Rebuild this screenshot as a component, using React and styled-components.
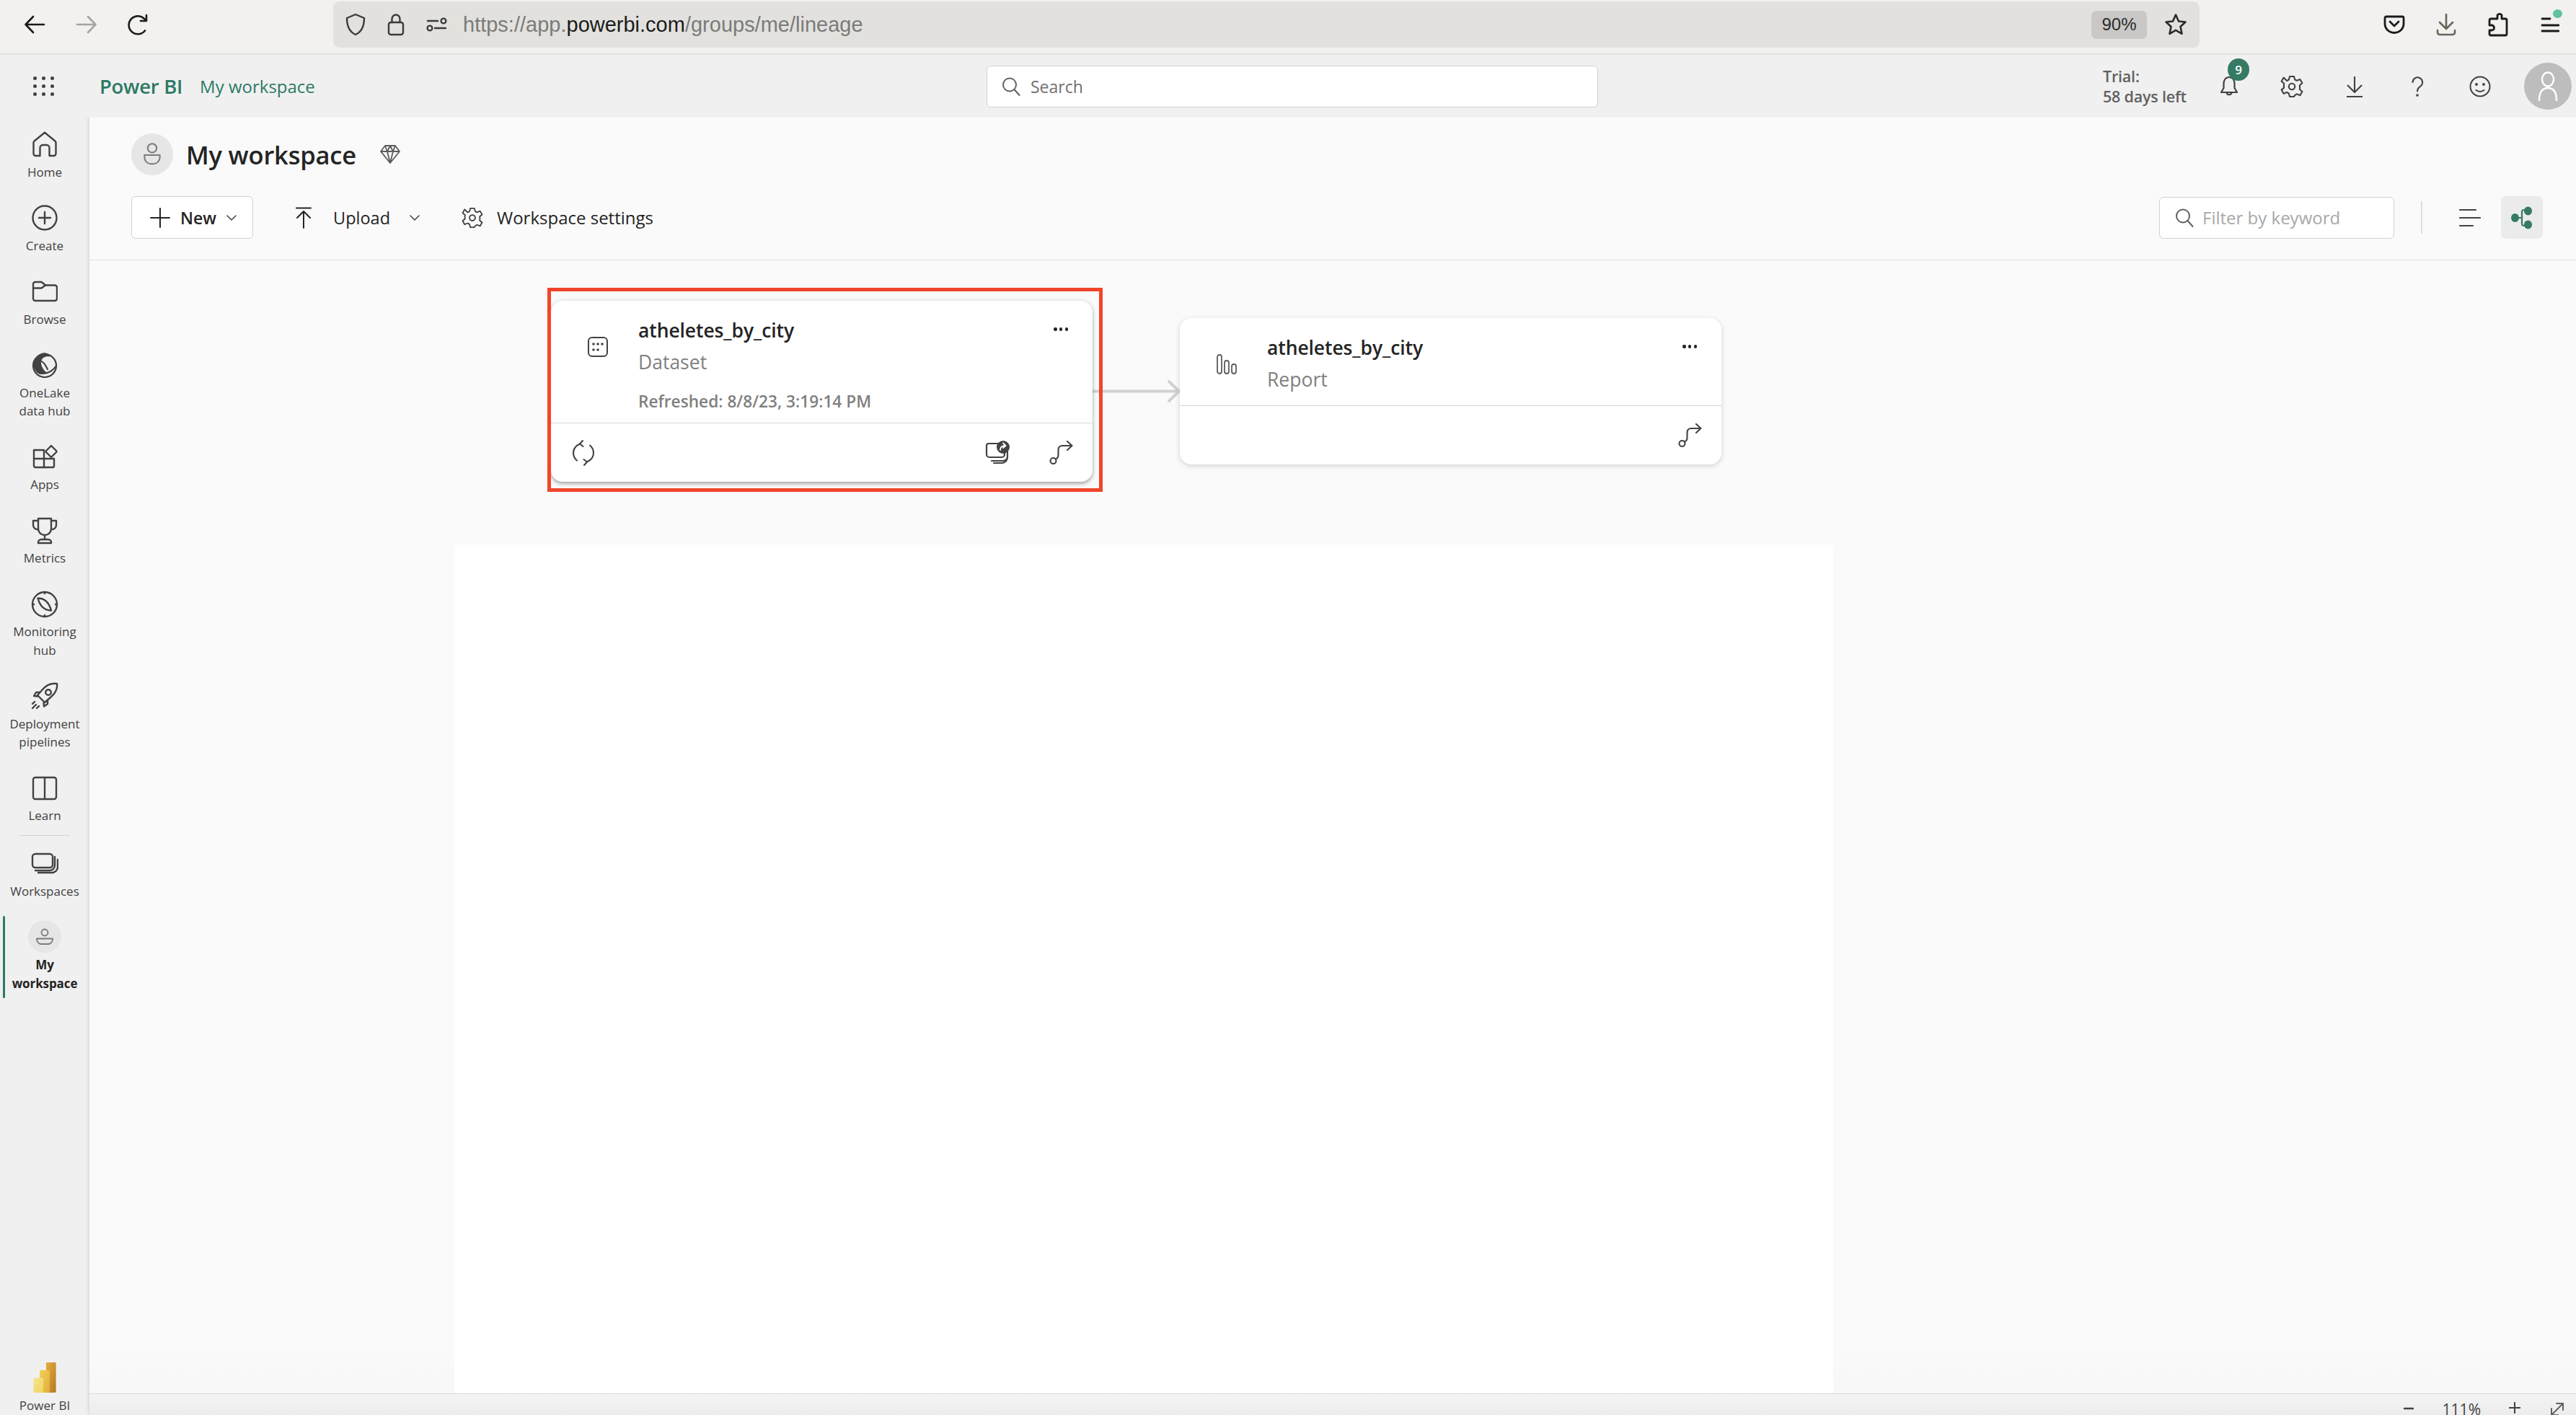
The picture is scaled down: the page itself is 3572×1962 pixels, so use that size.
import React from 'react';
import styled, { createGlobalStyle } from 'styled-components';

const GlobalStyle = createGlobalStyle`
  html, body { margin: 0; padding: 0; width: 100%; height: 100%; overflow: hidden; }
  body { font-family: "Open Sans", "Noto Sans", sans-serif; color: #242424; }
  #root { height: 100%; }
  * { box-sizing: border-box; }
`;

const Page = styled.div`
  width: 3572px; height: 1962px; display: flex; flex-direction: column; overflow: hidden; background: #f0f0f0;
`;

/* ---------- browser chrome ---------- */
const BrowserBar = styled.div`
  height: 76px; flex: none; display: flex; align-items: flex-start; background: #f2f1ef;
  border-bottom: 2px solid #e2e2e0; padding-left: 12px; padding-top: 2px;
`;
const ChromeButton = styled.div`
  width: 72px; height: 64px; flex: none; display: flex; align-items: center; justify-content: center;
`;
const UrlBar = styled.div`
  width: 2588px; height: 64px; margin-left: 234px; margin-right: 234px; flex: none; display: flex; align-items: center;
  background: #e2e1de; border-radius: 9px; padding: 0 17px 0 15px;
`;
const UrlIcon = styled.div`
  width: 32px; flex: none; margin-right: ${p => p.$gap}px; display: flex; align-items: center; justify-content: center;
`;
const UrlText = styled.div`
  font-family: "Liberation Sans", sans-serif; font-size: 29px; color: #7b7b79; white-space: nowrap; flex: 1;
`;
const UrlHost = styled.span`color: #1b1b1b;`;
const ZoomPill = styled.div`
  width: 77px; height: 39px; border-radius: 7px; background: #c9c8c6; flex: none;
  display: flex; align-items: center; justify-content: center;
  font-family: "Liberation Sans", sans-serif; font-size: 24px; color: #2b2b2b; margin-right: 24px;
`;
const MenuIconWrap = styled.div`position: relative; width: 72px; height: 64px; display: flex; align-items: center; justify-content: center; flex: none;`;
const UpdateDot = styled.span`
  position: absolute; left: 40px; top: 11px; width: 13px; height: 12px; border-radius: 50%; background: #5fc1a0;
`;

/* ---------- app header ---------- */
const AppHeader = styled.header`
  height: 87px; flex: none; display: flex; align-items: center; background: #f0f0f0; position: relative; z-index: 2;
`;
const BrandGroup = styled.div`
  width: 1368px; flex: none; display: flex; align-items: center; padding-left: 46px;
`;
const Waffle = styled.div`
  width: 29px; height: 27px; display: grid; grid-template-columns: repeat(3, 5px); grid-auto-rows: 5px; justify-content: space-between; align-content: space-between; flex: none;
`;
const WaffleDot = styled.span`background: #424242; border-radius: 50%;`;
const BrandName = styled.div`
  margin-left: 63px; font-size: 27.5px; font-weight: 600; color: #2d7a64; letter-spacing: -0.3px; white-space: nowrap;
`;
const BrandCrumb = styled.div`
  margin-left: 24px; font-size: 24px; color: #2d7a64; white-space: nowrap;
`;
const SearchBox = styled.div`
  width: 848px; height: 58px; flex: none; display: flex; align-items: center; gap: 14px; padding-left: 20px;
  background: #fff; border: 1px solid #d1d1d1; border-radius: 6px; font-size: 23px; color: #707070;
`;
const HeaderRight = styled.div`
  margin-left: auto; display: flex; align-items: center; padding-right: 6px;
`;
const TrialText = styled.div`
  width: 131px; font-size: 21.5px; line-height: 28px; font-weight: 600; color: #616161; white-space: nowrap; letter-spacing: -0.2px;
`;
const HeaderIcon = styled.div`
  width: 87px; height: 60px; flex: none; position: relative; display: flex; align-items: center; justify-content: center;
`;
const Badge = styled.span`
  position: absolute; left: 42px; top: -9px; width: 30px; height: 31px; border-radius: 50%; background: #367a64; color: #fff;
  font-size: 17px; font-weight: 600; display: flex; align-items: center; justify-content: center;
`;
const Avatar = styled.div`
  width: 66px; height: 65px; margin-left: 18px; border-radius: 50%; background: #bdbdbd; display: flex; align-items: center; justify-content: center; flex: none;
`;

/* ---------- sidebar ---------- */
const Body = styled.div`flex: 1; min-height: 0; display: flex;`;
const Sidebar = styled.nav`
  width: 124px; flex: none; background: #f0f0f0; display: flex; flex-direction: column; align-items: center; padding-top: 19px; position: relative;
`;
const NavList = styled.div`width: 100%; display: flex; flex-direction: column; gap: 33px;`;
const NavItem = styled.div`
  display: flex; flex-direction: column; align-items: center; width: 100%;
`;
const NavIcon = styled.div`
  height: 36px; margin-bottom: 7.5px; display: flex; align-items: center; justify-content: center; flex: none;
`;
const NavLabel = styled.div`
  font-size: 17px; line-height: 25.5px; color: #424242; text-align: center;
`;
const NavDivider = styled.div`
  width: 70px; height: 1px; background: #d1d1d1; margin: 14.5px 0 20px; flex: none;
`;
const ActiveItem = styled.div`
  width: 100%; height: 114px; margin-top: 22px; padding-top: 6px; position: relative; display: flex; flex-direction: column; align-items: center;
`;
const ActiveBar = styled.span`
  position: absolute; left: 4px; top: 0; bottom: 0; width: 3px; background: #2d7a64; border-radius: 2px;
`;
const ActiveCircle = styled.div`
  width: 46px; height: 45px; border-radius: 50%; background: #e6e6e6; display: flex; align-items: center; justify-content: center; margin-bottom: 4px;
`;
const ActiveLabel = styled.div`
  font-size: 17px; line-height: 26px; font-weight: 700; color: #242424; text-align: center; letter-spacing: -0.1px;
`;
const ProductSwitch = styled.div`
  margin-top: auto; display: flex; flex-direction: column; align-items: center; height: 73px;
`;
const ProductLabel = styled.div`
  font-size: 17px; line-height: 26px; color: #424242; white-space: nowrap; margin-top: 5px;
`;

/* ---------- main ---------- */
const Main = styled.main`
  flex: 1; min-width: 0; display: flex; flex-direction: column; background: #fafafa; position: relative;
  box-shadow: -1px -1px 5px rgba(0,0,0,0.13);
`;
const WorkspaceHead = styled.div`
  flex: none; height: 198px; padding: 22px 46px 0 58px; border-bottom: 1px solid #e0e0e0; display: flex; flex-direction: column; gap: 29px;
`;
const TitleRow = styled.div`display: flex; align-items: center; height: 58px;`;
const TitleAvatar = styled.div`
  width: 58px; height: 58px; border-radius: 50%; background: #e6e6e6; display: flex; align-items: center; justify-content: center; flex: none;
`;
const Title = styled.h1`
  margin: 0 0 0 18px; font-size: 34.5px; font-weight: 600; color: #242424; white-space: nowrap; letter-spacing: -0.2px;
`;
const Diamond = styled.div`margin-left: 32px; display: flex;`;
const ActionRow = styled.div`display: flex; align-items: center; height: 59px;`;
const NewButton = styled.div`
  width: 169px; height: 59px; flex: none; background: #fff; border: 1px solid #d1d1d1; border-radius: 6px;
  display: flex; align-items: center; padding-left: 25px; font-size: 23px; font-weight: 600; color: #242424;
`;
const ActionText = styled.span`
  margin-left: ${p => p.$gap}px; white-space: nowrap; font-size: ${p => p.$size || 23}px; color: #242424; font-weight: ${p => p.$bold ? 600 : 400};
`;
const ActionChevron = styled.span`margin-left: ${p => p.$gap}px; display: flex;`;
const ActionItem = styled.div`
  display: flex; align-items: center; margin-left: ${p => p.$gap}px; flex: none;
`;
const RightTools = styled.div`margin-left: auto; display: flex; align-items: center;`;
const FilterBox = styled.div`
  width: 326px; height: 58px; background: #fff; border: 1px solid #d1d1d1; border-radius: 6px; display: flex; align-items: center; gap: 12px; padding-left: 21px;
  font-size: 24px; color: #a8a8a8; white-space: nowrap;
`;
const ToolDivider = styled.div`width: 2px; height: 45px; background: #dedede; margin-left: 37px;`;
const ListToggle = styled.div`margin-left: 51px; width: 30px; display: flex;`;
const GraphToggle = styled.div`
  width: 58px; height: 59px; margin-left: 28px; background: #ebebeb; border-radius: 6px; display: flex; align-items: center; justify-content: center;
`;

/* ---------- lineage canvas ---------- */
const Canvas = styled.div`
  flex: 1; min-height: 0; position: relative; overflow: hidden; padding: 394px 0 0 506px;
  background: linear-gradient(to bottom, #fafafa calc(100% - 60px), #f7f7f7 100%);
`;
const BlankPanel = styled.div`width: 1912px; height: 100%; background: #ffffff;`;
const NodeCard = styled.article`
  position: absolute; left: ${p => p.$x}px; top: ${p => p.$y}px; width: 751px; background: #fff; border-radius: 16px;
  box-shadow: ${p => p.$selected ? '0 3px 5px rgba(0,0,0,0.28), 0 0 6px rgba(0,0,0,0.1)' : '0 2px 7px rgba(0,0,0,0.16)'};
  display: flex; flex-direction: column;
`;
const NodeBody = styled.div`
  height: ${p => p.$h}px; display: flex; align-items: flex-start; padding: 23px 34px 0 51px; border-bottom: 1px solid #d6d6d6;
`;
const NodeIcon = styled.div`width: 28px; height: 28px; margin-top: 27px; flex: none; display: flex;`;
const NodeText = styled.div`margin-left: 42px; flex: 1; min-width: 0;`;
const NodeTitle = styled.div`font-size: 26.5px; line-height: 36px; font-weight: 600; color: #242424; white-space: nowrap; letter-spacing: -0.1px;`;
const NodeType = styled.div`font-size: 26.5px; line-height: 36px; margin-top: 8px; color: #808080; white-space: nowrap;`;
const NodeMeta = styled.div`font-size: 22.7px; line-height: 32px; margin-top: 21px; font-weight: 600; color: #808080; white-space: nowrap;`;
const NodeMenu = styled.div`display: flex; flex: none; gap: 3px; margin-top: 14px; width: 20px; justify-content: space-between;`;
const MenuDot = styled.span`width: 4.5px; height: 4.5px; border-radius: 50%; background: #242424;`;
const NodeFoot = styled.div`
  height: 81px; display: flex; align-items: center; padding: 0 27px 0 29px; gap: 55px;
`;
const FootSpacer = styled.div`flex: 1;`;
const Connector = styled.svg`position: absolute; left: 1391px; top: 164px;`;
const SelectionFrame = styled.div`
  position: absolute; left: 635px; top: 38px; width: 770px; height: 283px; border: 5px solid #f1452b; pointer-events: none;
`;

/* ---------- status bar ---------- */
const StatusBar = styled.div`
  flex: none; height: 30px; border-top: 1px solid #d9d9d9; background: linear-gradient(to bottom, #f4f4f4, #ececec);
  display: flex; align-items: flex-start; justify-content: flex-end; padding-right: 17px; overflow: hidden;
`;
const StatusGlyph = styled.div`
  margin-left: ${p => p.$gap}px; display: flex; flex: none; margin-top: ${p => p.$top}px;
`;
const StatusText = styled.div`
  margin-left: ${p => p.$gap}px; font-size: 21px; line-height: 30px; color: #424242; margin-top: 6px;
`;

/* ---------- icons ---------- */
const Svg = ({ w, h, vw, vh, c = '#424242', sw = 2.4, children }) => (
  <svg width={w} height={h} viewBox={`0 0 ${vw || w} ${vh || h}`} fill="none" stroke={c} strokeWidth={sw} strokeLinecap="round" strokeLinejoin="round">{children}</svg>
);

const Icons = {
  Back: () => <Svg w={30} h={26} c="#1b1b1b" sw={2.6}><path d="M28 13H3M13 2 2.5 13 13 24" /></Svg>,
  Forward: () => <Svg w={30} h={26} c="#a4a4a2" sw={2.6}><path d="M2 13h25M17 2l10.5 11L17 24" /></Svg>,
  Reload: () => <Svg w={30} h={30} c="#1b1b1b" sw={2.6}><path d="M24 23.5A12.5 12.5 0 1 1 22.5 6.5L26 9.5M26 2v8h-8" /></Svg>,
  Shield: () => <Svg w={28} h={32} c="#3b3b3b" sw={2.4}><path d="M14 2 26 7c0 11-3 19-12 23C5 26 2 18 2 7Z" /></Svg>,
  Lock: () => <Svg w={24} h={32} c="#3b3b3b" sw={2.4}><path d="M6.5 13V8a5.5 5.5 0 0 1 11 0v5" /><rect x="2" y="13" width="20" height="17" rx="3" /></Svg>,
  Sliders: () => <Svg w={30} h={20} c="#3b3b3b" sw={2.4}><path d="M2 5h14M12 15h15" /><circle cx="24" cy="5" r="3.4" /><circle cx="5" cy="15" r="3.4" /></Svg>,
  Star: () => <Svg w={32} h={32} c="#2b2b2b" sw={2.6}><path d="m16 2.5 4 9 9.5 1-7 6.5 2 9.8-8.5-5-8.5 5 2-9.8-7-6.5 9.5-1Z" /></Svg>,
  Pocket: () => <Svg w={30} h={26} c="#1b1b1b" sw={2.8}><path d="M4 2h22a2 2 0 0 1 2 2v8a13 12.5 0 0 1-26 0V4a2 2 0 0 1 2-2Z" /><path d="m9 9 6 6 6-6" /></Svg>,
  DownloadFx: () => <Svg w={28} h={32} c="#66665a" sw={2.6}><path d="M14 2v20M5 13l9 9 9-9M2 24v3a3 3 0 0 0 3 3h18a3 3 0 0 0 3-3v-3" /></Svg>,
  Puzzle: () => <Svg w={28} h={34} c="#1b1b1b" sw={2.8}><path d="M13 4a3.5 3.5 0 0 1 6 0v5h5a2 2 0 0 1 2 2v19a2 2 0 0 1-2 2H4a2 2 0 0 1-2-2v-5h3a3.5 3.5 0 0 0 0-7H2v-7a2 2 0 0 1 2-2h9Z" /></Svg>,
  Menu: () => <Svg w={26} h={24} c="#1b1b1b" sw={2.8}><path d="M2 4h11M2 13h23M2 21h23" /></Svg>,
  Search: ({ s = 26, c = '#616161' }) => <Svg w={s} h={s} vw={26} vh={26} c={c} sw={2}><circle cx="11" cy="10.5" r="9" /><path d="m17.5 17 7 8" /></Svg>,
  Bell: () => <Svg w={26} h={30} sw={2.2}><path d="M13 2C7.5 2 5.5 7 5.5 11v6L2 23h22l-3.5-6v-6C20.500 7 18.500 2 13 2ZM9.500 23.500a3.600 3.600 0 0 0 7 0" /></Svg>,
  Gear: ({ s = 32, c = '#424242', sw = 2.1 }) => (
    <Svg w={s} h={s} vw={32} vh={32} c={c} sw={sw}>
      <path d="M13 2h6l1.200 4.500 2.800 1.300 4.400-1.800 3 5.200-3.500 3 .2 3-.2 2.800 3.500 3-3 5.200-4.400-1.800-2.800 1.600L19 30h-6l-1.200-4.500L9 24l-4.400 1.800-3-5.200 3.500-3-.2-2.800.2-3-3.500-3 3-5.200L9 8l2.800-1.500Z" />
      <circle cx="16" cy="16" r="4.200" />
    </Svg>
  ),
  Download: () => <Svg w={24} h={30} sw={2.1}><path d="M12 1v22M2 13l10 10 10-10M1 29h22" strokeLinecap="butt" /></Svg>,
  Help: () => <Svg w={18} h={28} sw={2.1}><path d="M2.500 8a6.800 6.800 0 1 1 11 5.500C10.500 15.800 9 17 9 20.500" /><circle cx="9" cy="26" r="0.8" /></Svg>,
  Smile: () => <Svg w={30} h={30} sw={2}><circle cx="15" cy="15" r="13.500" /><path d="M9.500 20c3 2.500 8 2.500 11 0" /><circle cx="10" cy="12" r="0.9" /><circle cx="20" cy="12" r="0.9" /></Svg>,
  UserWhite: () => <Svg w={28} h={42} c="#fff" sw={2.4}><ellipse cx="14" cy="11" rx="8" ry="9.500" /><path d="M2 40c0-11 4-17 12-17s12 6 12 17" /></Svg>,
  Home: () => <Svg w={34} h={36}><path d="M17 1.800 31.300 13.500a3 3 0 0 1 1.200 2.500V31a3 3 0 0 1-3 3H23.500V23a4 4 0 0 0-4-4h-5a4 4 0 0 0-4 4V34H4.500a3 3 0 0 1-3-3V16a3 3 0 0 1 1.200-2.500Z" /></Svg>,
  Create: () => <Svg w={36} h={36}><circle cx="18" cy="18" r="16.500" /><path d="M18 10v16M10 18h16" /></Svg>,
  Folder: () => <Svg w={36} h={30}><path d="M2 5a3 3 0 0 1 3-3h8.500L19 6.500h13a3 3 0 0 1 3 3V25a3 3 0 0 1-3 3H5a3 3 0 0 1-3-3Z" /><path d="M2 10.500h11.500L19 6.500" /></Svg>,
  OneLake: () => (
    <Svg w={36} h={36} sw={2.2}>
      <circle cx="18" cy="19" r="16" />
      <path d="M2.500 15C4 8 9 3 15 1.500c6-1 10 2 11 5-7-1-12 1-13 7 0 7 3 11 7 14.500-4 3-9 4-12 1-4-3-6-8-5.500-14Z" fill="#424242" stroke="none" />
      <path d="M10 29c6 2 17 1 24-10" />
      <path d="M13 13c3 0 7 7 9 11" />
    </Svg>
  ),
  Apps: () => <Svg w={36} h={36}><path d="M3 8h14v24H5a2 2 0 0 1-2-2Zm0 12h28M17 20v12h12a2 2 0 0 0 2-2V20" /><path d="m27 2 7 7a1.500 1.500 0 0 1 0 2l-7 7-7-7a1.500 1.500 0 0 1 0-2Z" /></Svg>,
  Trophy: () => <Svg w={36} h={38}><path d="M9 2h18v14a9 9 0 0 1-18 0Z" /><path d="M9 5H2v6a6 6 0 0 0 7 6M27 5h7v6a6 6 0 0 1-7 6M18 25v6M9 36v-1a4 4 0 0 1 4-4h10a4 4 0 0 1 4 4v1Z" /></Svg>,
  Compass: () => <Svg w={38} h={38}><circle cx="19" cy="19" r="17" /><path d="M9.500 10.500c8 0 15 4 18.500 17-8 0-15-4-18.500-17Z" /><path d="M19 2v2M19 34v2M2 19h2M34 19h2" /></Svg>,
  Rocket: () => (
    <Svg w={38} h={38}>
      <path d="M36 2c-8-1-15 2-20 8l-7 8 10 10 8-7c6-5 10-12 9-19Z" />
      <circle cx="24" cy="14" r="3.800" />
      <path d="M12 14H7l-3 5 5 .5M23 25v5l-5 3.500-.5-5M2 36l5-5M8 36l3-3M2 30l3-3" />
    </Svg>
  ),
  Book: () => <Svg w={36} h={34}><path d="M2 5a3 3 0 0 1 3-3h13v30H5a3 3 0 0 1-3-3ZM18 2h13a3 3 0 0 1 3 3v24a3 3 0 0 1-3 3H18" /></Svg>,
  Stack: ({ w = 38, h = 30, c = '#424242' }) => <Svg w={w} h={h} vw={38} vh={30} c={c}><rect x="2" y="2" width="28" height="19" rx="4" /><path d="M33 6v12a7 7 0 0 1-7 7H6M37 10v10a8 8 0 0 1-8 8H10" /></Svg>,
  Person: ({ s = 28, c = '#7a7a7a' }) => <Svg w={s} h={s * 1.2} vw={24} vh={30} c={c} sw={1.8}><circle cx="12" cy="7.500" r="5.500" /><path d="M2.500 16h19v3a8 8 0 0 1-8 8h-3a8 8 0 0 1-8-8Z" /></Svg>,
  PersonSmall: () => <Svg w={26} h={24} c="#7a7a7a" sw={1.8}><circle cx="13" cy="6" r="4.500" /><path d="M2 14.500h22v1a6.500 6.500 0 0 1-6.500 6.500h-9A6.500 6.500 0 0 1 2 15.500Z" /></Svg>,
  Gem: () => <Svg w={30} h={28} c="#5c5c5c" sw={1.8}><path d="M8 2h14l6 8-13 16L2 10ZM2 10h26M8 2l3 8 4 16 4-16 3-8M11 10l4-8 4 8" /></Svg>,
  Plus: () => <Svg w={28} h={28} c="#242424" sw={2}><path d="M14 1v26M1 14h26" /></Svg>,
  Chevron: ({ c = '#424242' }) => <Svg w={14} h={8} c={c} sw={1.5}><path d="m1 1 6 6 6-6" /></Svg>,
  Upload: () => <Svg w={24} h={30} c="#242424" sw={2}><path d="M2 1.500h20M12 29V6M3 15l9-9 9 9" /></Svg>,
  ListView: () => <Svg w={30} h={26} c="#424242" sw={2.2}><path d="M1 2h22M1 13h28M1 24h18" /></Svg>,
  Graph: () => (
    <svg width="32" height="32" viewBox="0 0 32 32">
      <g fill="none" stroke="#367a64" strokeWidth="2.200"><path d="M8 16h8M22 5h-3a3 3 0 0 0-3 3v16a3 3 0 0 0 3 3h3" /></g>
      <g fill="#367a64"><ellipse cx="6.500" cy="16" rx="5.500" ry="6" /><ellipse cx="24.500" cy="6.500" rx="5.500" ry="6" /><ellipse cx="24.500" cy="25.500" rx="5.500" ry="6" /></g>
    </svg>
  ),
  Dataset: () => (
    <svg width="28" height="28" viewBox="0 0 28 28">
      <rect x="1" y="1" width="26" height="26" rx="5" fill="none" stroke="#424242" strokeWidth="2" />
      <g fill="#424242"><circle cx="8" cy="10" r="1.800" /><circle cx="14" cy="10" r="1.800" /><circle cx="20" cy="10" r="1.800" /><circle cx="8" cy="18" r="1.800" /><circle cx="14" cy="18" r="1.800" /></g>
    </svg>
  ),
  Report: () => <Svg w={28} h={28} c="#5c5c5c" sw={1.8}><rect x="1" y="1" width="6" height="26" rx="3" /><rect x="11" y="9" width="6" height="18" rx="3" /><rect x="21" y="14" width="6" height="13" rx="3" /></Svg>,
  Refresh: () => <Svg w={32} h={38} sw={2.100}><path d="M11 6.500C5.500 9 2 13.500 2 19c0 4 2 8 5 10.500M21 31.500C26.500 29 30 24.500 30 19c0-4-2-8-5-10.500" /><path d="m15 2-4 4.500 4.500 3.500M17 36l4-4.500-4.500-3.500" /></Svg>,
  Route: ({ c = '#424242' }) => <Svg w={33} h={33} c={c} sw={2.100}><circle cx="5.500" cy="28" r="4" /><path d="M9 25.500c3.500-1.500 3.500-4 3.500-7v-6c0-3.500 2-5.500 5.500-5.500h13.500M25 1l6.500 6-6.500 6" /></Svg>,
  Share: () => (
    <svg width="34" height="33" viewBox="0 0 34 33">
      <g fill="none" stroke="#424242" strokeWidth="2.200" strokeLinecap="round">
        <path d="M18 4H5a3 3 0 0 0-3 3v12a4 4 0 0 0 4 4h17a4 4 0 0 0 4-4v-3" />
        <path d="M31 15v7a6 6 0 0 1-6 6H9M31 22c0 6-4 9-8 9H12" />
      </g>
      <circle cx="25" cy="9" r="9" fill="#424242" />
      <path d="M21 13c0-4 2-6 7-6M25 3.500l3.500 3.500-3.500 3" fill="none" stroke="#fff" strokeWidth="1.800" strokeLinecap="round" />
    </svg>
  ),
  Minus: () => <Svg w={14} h={4} sw={2.600}><path d="M1 2h12" /></Svg>,
  StatusPlus: () => <Svg w={16} h={16} sw={2}><path d="M8 0v16M0 8h16" /></Svg>,
  Expand: () => <Svg w={18} h={18} c="#616161" sw={2}><path d="M1 17 17 1M8 1h9v9M1 8v9h9" /></Svg>,
  Logo: () => (
    <svg width="32" height="43" viewBox="0 0 32 43">
      <defs>
        <linearGradient id="lg1" x1="0" y1="0" x2="1" y2="1"><stop offset="0" stopColor="#e6ad3c" /><stop offset="1" stopColor="#b37a28" /></linearGradient>
        <linearGradient id="lg2" x1="0" y1="0" x2="1" y2="1"><stop offset="0" stopColor="#f2cf55" /><stop offset="1" stopColor="#dfae3e" /></linearGradient>
        <linearGradient id="lg3" x1="0" y1="0" x2="1" y2="1"><stop offset="0" stopColor="#f7e58f" /><stop offset="1" stopColor="#efd35f" /></linearGradient>
      </defs>
      <rect x="18" y="0" width="14" height="43" rx="1.500" fill="url(#lg1)" />
      <rect x="9" y="11" width="14" height="32" rx="1.500" fill="url(#lg2)" />
      <rect x="0" y="22" width="14" height="21" rx="1.500" fill="url(#lg3)" />
    </svg>
  ),
};

const navItems = [
  { icon: <Icons.Home />, label: ['Home'] },
  { icon: <Icons.Create />, label: ['Create'] },
  { icon: <Icons.Folder />, label: ['Browse'] },
  { icon: <Icons.OneLake />, label: ['OneLake', 'data hub'] },
  { icon: <Icons.Apps />, label: ['Apps'] },
  { icon: <Icons.Trophy />, label: ['Metrics'] },
  { icon: <Icons.Compass />, label: ['Monitoring', 'hub'] },
  { icon: <Icons.Rocket />, label: ['Deployment', 'pipelines'] },
  { icon: <Icons.Book />, label: ['Learn'] },
];

const Label = ({ lines }) => <NavLabel>{lines.map(l => <div key={l}>{l}</div>)}</NavLabel>;

export default function App() {
  return (
    <Page>
      <GlobalStyle />
      <BrowserBar>
        <ChromeButton><Icons.Back /></ChromeButton>
        <ChromeButton><Icons.Forward /></ChromeButton>
        <ChromeButton><Icons.Reload /></ChromeButton>
        <UrlBar>
          <UrlIcon $gap={24}><Icons.Shield /></UrlIcon>
          <UrlIcon $gap={25}><Icons.Lock /></UrlIcon>
          <UrlIcon $gap={20}><Icons.Sliders /></UrlIcon>
          <UrlText>https://app.<UrlHost>powerbi.com</UrlHost>/groups/me/lineage</UrlText>
          <ZoomPill>90%</ZoomPill>
          <Icons.Star />
        </UrlBar>
        <MenuIconWrap><Icons.Pocket /></MenuIconWrap>
        <MenuIconWrap><Icons.DownloadFx /></MenuIconWrap>
        <MenuIconWrap><Icons.Puzzle /></MenuIconWrap>
        <MenuIconWrap><Icons.Menu /><UpdateDot /></MenuIconWrap>
      </BrowserBar>

      <AppHeader>
        <BrandGroup>
          <Waffle>{Array.from({ length: 9 }, (_, i) => <WaffleDot key={i} />)}</Waffle>
          <BrandName>Power BI</BrandName>
          <BrandCrumb>My workspace</BrandCrumb>
        </BrandGroup>
        <SearchBox><Icons.Search />Search</SearchBox>
        <HeaderRight>
          <TrialText><div>Trial:</div><div>58 days left</div></TrialText>
          <HeaderIcon><Icons.Bell /><Badge>9</Badge></HeaderIcon>
          <HeaderIcon><Icons.Gear /></HeaderIcon>
          <HeaderIcon><Icons.Download /></HeaderIcon>
          <HeaderIcon><Icons.Help /></HeaderIcon>
          <HeaderIcon><Icons.Smile /></HeaderIcon>
          <Avatar><Icons.UserWhite /></Avatar>
        </HeaderRight>
      </AppHeader>

      <Body>
        <Sidebar>
          <NavList>
            {navItems.map(it => (
              <NavItem key={it.label[0]}>
                <NavIcon>{it.icon}</NavIcon>
                <Label lines={it.label} />
              </NavItem>
            ))}
          </NavList>
          <NavDivider />
          <NavItem>
            <NavIcon><Icons.Stack /></NavIcon>
            <Label lines={['Workspaces']} />
          </NavItem>
          <ActiveItem>
            <ActiveBar />
            <ActiveCircle><Icons.PersonSmall /></ActiveCircle>
            <ActiveLabel><div>My</div><div>workspace</div></ActiveLabel>
          </ActiveItem>
          <ProductSwitch>
            <Icons.Logo />
            <ProductLabel>Power BI</ProductLabel>
          </ProductSwitch>
        </Sidebar>

        <Main>
          <WorkspaceHead>
            <TitleRow>
              <TitleAvatar><Icons.Person /></TitleAvatar>
              <Title>My workspace</Title>
              <Diamond><Icons.Gem /></Diamond>
            </TitleRow>
            <ActionRow>
              <NewButton>
                <Icons.Plus />
                <ActionText $gap={14} $bold>New</ActionText>
                <ActionChevron $gap={14}><Icons.Chevron /></ActionChevron>
              </NewButton>
              <ActionItem $gap={58}>
                <Icons.Upload />
                <ActionText $gap={29} $size={23.5}>Upload</ActionText>
                <ActionChevron $gap={27}><Icons.Chevron /></ActionChevron>
              </ActionItem>
              <ActionItem $gap={58}>
                <Icons.Gear s={30} sw={2} />
                <ActionText $gap={19} $size={24}>Workspace settings</ActionText>
              </ActionItem>
              <RightTools>
                <FilterBox><Icons.Search s={26} />Filter by keyword</FilterBox>
                <ToolDivider />
                <ListToggle><Icons.ListView /></ListToggle>
                <GraphToggle><Icons.Graph /></GraphToggle>
              </RightTools>
            </ActionRow>
          </WorkspaceHead>

          <Canvas>
            <BlankPanel />
            <Connector width="122" height="34" viewBox="0 0 122 34" fill="none" stroke="#d1d1d1" strokeWidth="4">
              <path d="M0 17.500h119M105 3l15 14.500L105 32" />
            </Connector>
            <NodeCard $x={640} $y={56} $selected>
              <NodeBody $h={170}>
                <NodeIcon><Icons.Dataset /></NodeIcon>
                <NodeText>
                  <NodeTitle>atheletes_by_city</NodeTitle>
                  <NodeType>Dataset</NodeType>
                  <NodeMeta>Refreshed: 8/8/23, 3:19:14 PM</NodeMeta>
                </NodeText>
                <NodeMenu><MenuDot /><MenuDot /><MenuDot /></NodeMenu>
              </NodeBody>
              <NodeFoot>
                <Icons.Refresh />
                <FootSpacer />
                <Icons.Share />
                <Icons.Route />
              </NodeFoot>
            </NodeCard>
            <NodeCard $x={1512} $y={80}>
              <NodeBody $h={122}>
                <NodeIcon><Icons.Report /></NodeIcon>
                <NodeText>
                  <NodeTitle>atheletes_by_city</NodeTitle>
                  <NodeType>Report</NodeType>
                </NodeText>
                <NodeMenu><MenuDot /><MenuDot /><MenuDot /></NodeMenu>
              </NodeBody>
              <NodeFoot>
                <FootSpacer />
                <Icons.Route />
              </NodeFoot>
            </NodeCard>
            <SelectionFrame />
          </Canvas>

          <StatusBar>
            <StatusGlyph $top={18}><Icons.Minus /></StatusGlyph>
            <StatusText $gap={40}>111%</StatusText>
            <StatusGlyph $gap={39} $top={11}><Icons.StatusPlus /></StatusGlyph>
            <StatusGlyph $gap={42} $top={12}><Icons.Expand /></StatusGlyph>
          </StatusBar>
        </Main>
      </Body>
    </Page>
  );
}
